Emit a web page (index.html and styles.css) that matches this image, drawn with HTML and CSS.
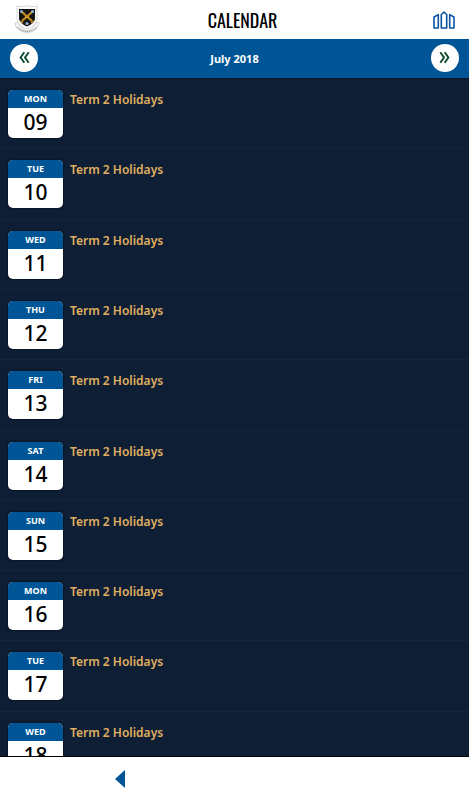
FILE: index.html
```html
<!DOCTYPE html>
<html lang="en">
<head>
  <meta charset="UTF-8">
  <meta name="viewport" content="width=device-width, initial-scale=1.0">
  <title>Calendar</title>
  <link rel="stylesheet" href="styles.css">
</head>
<body>
  <header class="top-bar">
    <svg class="crest" viewBox="0 0 26 29" role="img" aria-label="School crest">
      <path d="M1 18 Q1 26 13 28 Q25 26 25 18 L22 17 Q21 23 13 26 Q5 23 4 17 Z" fill="#f4f4f4" stroke="#c9c9c9" stroke-width=".7"/>
      <path d="M3 1 Q8 2.5 13 .8 Q18 2.5 23 1 V14 Q22 21 13 24 Q4 21 3 14 Z" fill="#fff" stroke="#ccc" stroke-width=".8"/>
      <path d="M5 4 H21 V14 Q20 19 13 21.5 Q6 19 5 14 Z" fill="#141414"/>
      <path d="M8 7 L18 16 M18 7 L8 16" stroke="#c48a1e" stroke-width="2.2"/>
      <path d="M6.5 16 L9 18 M19.5 16 L17 18 M11 12 H15" stroke="#d79b28" stroke-width="1.3"/>
      <circle cx="7.5" cy="6.5" r="1.5" fill="#8fb8d8"/>
      <circle cx="18.5" cy="6.5" r="1.5" fill="#8fb8d8"/>
      <circle cx="13" cy="18.5" r="1.5" fill="#8fb8d8"/>
      <path d="M3 22 Q7 26 13 26.6 Q19 26 23 22" fill="none" stroke="#777" stroke-width="1" stroke-dasharray="1.4 .8"/>
    </svg>
    <h1>CALENDAR</h1>
    <button class="campus-button" aria-label="Campus">
      <svg viewBox="0 0 22 18">
        <path d="M1 17 V6 L5.3 3.6 V17 Z M8.3 17 V3.5 L11 1.2 L13.7 3.5 V17 Z M16.7 17 V3.6 L21 6 V17 Z" fill="none" stroke="#0b55a0" stroke-width="1.6" stroke-linejoin="round"/>
      </svg>
    </button>
  </header>

  <nav class="month-bar">
    <button class="month-button" aria-label="Previous month">
      <svg viewBox="0 0 11 13"><path d="M5.3 1.2 L1.6 6.5 L5.3 11.8 M9.7 1.2 L6 6.5 L9.7 11.8"/></svg>
    </button>
    <h2>July 2018</h2>
    <button class="month-button" aria-label="Next month">
      <svg viewBox="0 0 11 13"><path d="M1.3 1.2 L5 6.5 L1.3 11.8 M5.7 1.2 L9.4 6.5 L5.7 11.8"/></svg>
    </button>
  </nav>

  <main class="events">
    <ul class="event-list">
      <li class="event">
        <div class="date"><span class="weekday">MON</span><span class="day">09</span></div>
        <span class="event-title">Term 2 Holidays</span>
      </li>
      <li class="event">
        <div class="date"><span class="weekday">TUE</span><span class="day">10</span></div>
        <span class="event-title">Term 2 Holidays</span>
      </li>
      <li class="event">
        <div class="date"><span class="weekday">WED</span><span class="day">11</span></div>
        <span class="event-title">Term 2 Holidays</span>
      </li>
      <li class="event">
        <div class="date"><span class="weekday">THU</span><span class="day">12</span></div>
        <span class="event-title">Term 2 Holidays</span>
      </li>
      <li class="event">
        <div class="date"><span class="weekday">FRI</span><span class="day">13</span></div>
        <span class="event-title">Term 2 Holidays</span>
      </li>
      <li class="event">
        <div class="date"><span class="weekday">SAT</span><span class="day">14</span></div>
        <span class="event-title">Term 2 Holidays</span>
      </li>
      <li class="event">
        <div class="date"><span class="weekday">SUN</span><span class="day">15</span></div>
        <span class="event-title">Term 2 Holidays</span>
      </li>
      <li class="event">
        <div class="date"><span class="weekday">MON</span><span class="day">16</span></div>
        <span class="event-title">Term 2 Holidays</span>
      </li>
      <li class="event">
        <div class="date"><span class="weekday">TUE</span><span class="day">17</span></div>
        <span class="event-title">Term 2 Holidays</span>
      </li>
      <li class="event">
        <div class="date"><span class="weekday">WED</span><span class="day">18</span></div>
        <span class="event-title">Term 2 Holidays</span>
      </li>
    </ul>
  </main>

  <footer class="bottom-bar">
    <button class="back-button" aria-label="Back">
      <svg viewBox="0 0 10 18"><path d="M10 0 V18 L0 9 Z" fill="#005596"/></svg>
    </button>
  </footer>
</body>
</html>
```
FILE: styles.css
```css
* {
  box-sizing: border-box;
}

body {
  margin: 0;
  height: 100vh;
  display: flex;
  flex-direction: column;
  background-color: #0d1e35;
  font-family: "Noto Sans", "Open Sans", sans-serif;
}

button {
  padding: 0;
  border: none;
  background: none;
  cursor: pointer;
}

svg {
  display: block;
}

/* Top bar */
.top-bar {
  flex: none;
  display: grid;
  grid-template-columns: 1fr auto 1fr;
  align-items: center;
  height: 39px;
  padding: 0 14px;
  background-color: white;
}

.crest {
  width: 26px;
  height: 29px;
}

h1 {
  margin: 0;
  padding-left: 16px;
  font-family: "Oswald", "Liberation Sans Narrow", "Liberation Sans", sans-serif;
  font-size: 18px;
  line-height: 28px;
  font-weight: 400;
  color: #000;
}

.campus-button {
  justify-self: end;
}

.campus-button svg {
  width: 22px;
  height: 18px;
}

/* Month switcher */
.month-bar {
  flex: none;
  display: flex;
  justify-content: space-between;
  align-items: center;
  height: 40px;
  padding: 0 10px 2px;
  background-color: #005596;
  border-bottom: 1px solid #0a1526;
}

h2 {
  margin: 0;
  padding-top: 2px;
  font-size: 11px;
  color: white;
}

.month-button {
  display: flex;
  justify-content: center;
  align-items: center;
  width: 28px;
  height: 28px;
  border-radius: 50%;
  background-color: white;
}

.month-button svg {
  width: 11px;
  height: 13px;
  fill: none;
  stroke: #0b4a2c;
  stroke-width: 1.9;
}

/* Events */
.events {
  flex: 1;
  min-height: 0;
  overflow: hidden;
  border-bottom: 1px solid #000;
}

.event-list {
  display: grid;
  grid-auto-rows: 1fr;
  min-height: calc(100% + 26px);
  margin: 0;
  padding: 0;
  list-style: none;
}

.event {
  display: flex;
  align-items: flex-start;
  gap: 7px;
  padding: 11px 8px 10px;
  border-bottom: 1px solid #12263f;
}

.date {
  width: 55px;
  border-radius: 5px;
  overflow: hidden;
  background-color: white;
  box-shadow: 0 0 2px #000;
  text-align: center;
}

.weekday {
  display: block;
  line-height: 18px;
  background-color: #005596;
  font-size: 9px;
  font-weight: bold;
  color: white;
}

.day {
  display: block;
  padding-bottom: 2px;
  line-height: 28px;
  font-size: 21px;
  font-weight: 500;
  color: #000;
}

.event-title {
  line-height: 20px;
  font-size: 12px;
  font-weight: 600;
  color: #e0b060;
}

/* Bottom bar */
.bottom-bar {
  flex: none;
  display: grid;
  grid-template-columns: repeat(2, 1fr);
  align-items: center;
  height: 43px;
  padding-left: 4px;
  background-color: white;
}

.back-button {
  justify-self: center;
}

.back-button svg {
  width: 10px;
  height: 18px;
}
```
